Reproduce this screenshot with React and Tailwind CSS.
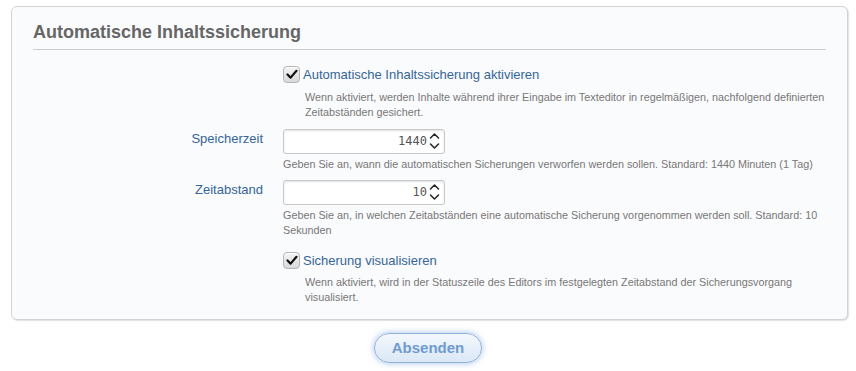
import React from "react";

function Check() {
  return (
    <span className="flex h-[17px] w-[17px] shrink-0 items-center justify-center rounded-[4px] border border-[#b5b5b5] bg-gradient-to-b from-[#f4f4f4] to-[#d9d9d9] shadow-[inset_0_1px_0_#fff]">
      <svg width="12" height="11" viewBox="0 0 12 11">
        <path d="M1.5 5.5 L4.6 8.6 L10.5 1.8" fill="none" stroke="#111" strokeWidth="2.2" strokeLinecap="round" strokeLinejoin="round" />
      </svg>
    </span>
  );
}

function NumberInput({ value }) {
  return (
    <div className="flex h-[25px] w-[162px] items-center justify-end rounded-[3px] border border-[#c8c8c8] bg-white pr-[3px] shadow-[inset_0_1px_2px_rgba(0,0,0,0.12)]">
      <span className="font-['DejaVu_Sans_Mono',monospace] text-[12px] text-[#555]">{value}</span>
      <svg width="13" height="20" viewBox="0 0 13 20" className="ml-[1px]">
        <path d="M2.5 7 L6.5 3 L10.5 7" fill="none" stroke="#222" strokeWidth="1.5" strokeLinecap="round" strokeLinejoin="round" />
        <path d="M2.5 13 L6.5 17 L10.5 13" fill="none" stroke="#222" strokeWidth="1.5" strokeLinecap="round" strokeLinejoin="round" />
      </svg>
    </div>
  );
}

export default function App() {
  const help = "text-[10.8px] leading-[15px] text-[#777]";
  const label = "text-[13px] text-[#34659b]";
  return (
    <div className="min-h-[371px] w-[856px] bg-white font-['Liberation_Sans',Arial,sans-serif]">
      <div className="pl-[11px] pr-[8px] pt-[6px]">
        <div className="rounded-[6px] border border-[#d3d3d3] bg-[#fafbfd] px-[21px] pb-[14px] pt-[14px] shadow-[1px_1px_1px_rgba(0,0,0,0.12)]">
          <h2 className="border-b border-[#cfcfcf] pb-[6px] text-[18px] font-bold leading-[22px] text-[#666]">
            Automatische Inhaltssicherung
          </h2>
          <div className="grid grid-cols-[230px_1fr] gap-x-[20px] pt-[15px]">
            <div />
            <div>
              <div className="flex items-center gap-[3px]">
                <Check />
                <span className={label}>Automatische Inhaltssicherung aktivieren</span>
              </div>
              <p className={`${help} mt-[5px] pl-[22px]`}>
                Wenn aktiviert, werden Inhalte während ihrer Eingabe im Texteditor in regelmäßigen, nachfolgend definierten Zeitabständen gesichert.
              </p>
            </div>

            <div className={`${label} mt-[9px] text-right`}>Speicherzeit</div>
            <div className="mt-[9px]">
              <NumberInput value="1440" />
              <p className={`${help} mt-[3px]`}>
                Geben Sie an, wann die automatischen Sicherungen verworfen werden sollen. Standard: 1440 Minuten (1 Tag)
              </p>
            </div>

            <div className={`${label} mt-[8px] text-right`}>Zeitabstand</div>
            <div className="mt-[8px]">
              <NumberInput value="10" />
              <p className={`${help} mt-[3px]`}>
                Geben Sie an, in welchen Zeitabständen eine automatische Sicherung vorgenommen werden soll. Standard: 10 Sekunden
              </p>
            </div>

            <div />
            <div className="mt-[13px]">
              <div className="flex items-center gap-[3px]">
                <Check />
                <span className={label}>Sicherung visualisieren</span>
              </div>
              <p className={`${help} mt-[5px] pl-[22px]`}>
                Wenn aktiviert, wird in der Statuszeile des Editors im festgelegten Zeitabstand der Sicherungsvorgang visualisiert.
              </p>
            </div>
          </div>
        </div>
      </div>
      <div className="flex justify-center pt-[13px]">
        <button className="h-[30px] w-[108px] rounded-full border border-[#8fb2dc] bg-gradient-to-b from-[#f3f8fd] to-[#dbe8f6] text-[15px] font-bold text-[#6f9bd2] shadow-[0_0_6px_rgba(120,165,220,0.7)]">
          Absenden
        </button>
      </div>
    </div>
  );
}
